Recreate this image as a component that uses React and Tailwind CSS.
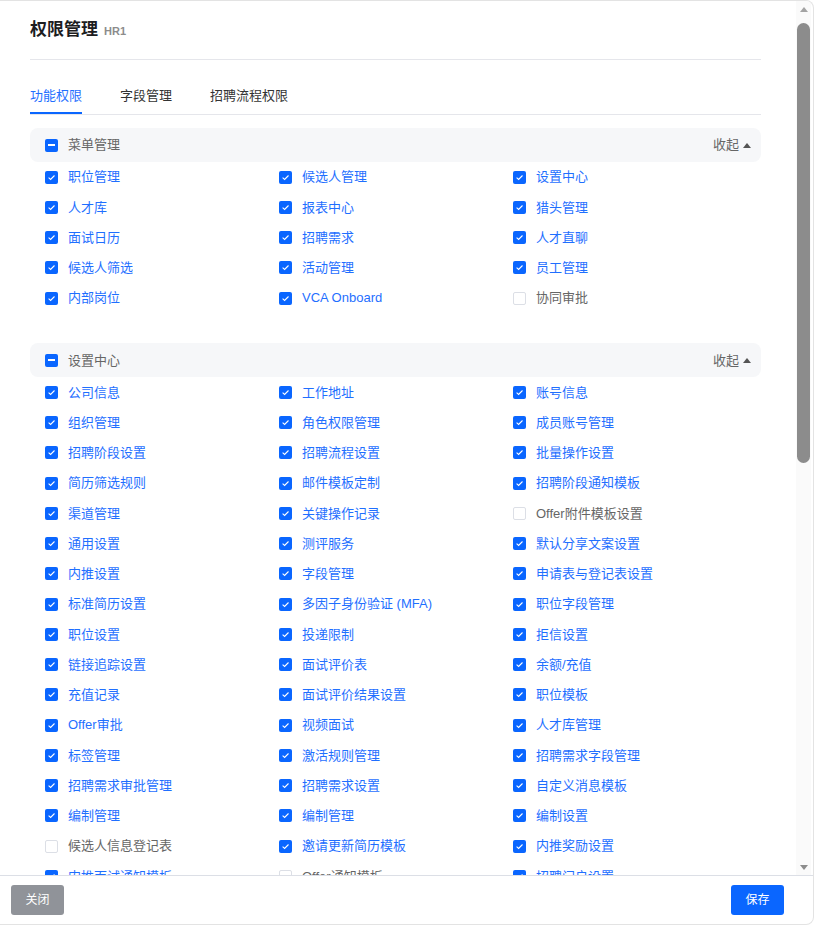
import React from 'react'

const FONT = { fontFamily: '"Liberation Sans", "Noto Sans CJK SC", sans-serif' }

// [label, checked]
const menuItems = [
  ['职位管理', 1], ['候选人管理', 1], ['设置中心', 1],
  ['人才库', 1], ['报表中心', 1], ['猎头管理', 1],
  ['面试日历', 1], ['招聘需求', 1], ['人才直聊', 1],
  ['候选人筛选', 1], ['活动管理', 1], ['员工管理', 1],
  ['内部岗位', 1], ['VCA Onboard', 1], ['协同审批', 0],
]

const settingItems = [
  ['公司信息', 1], ['工作地址', 1], ['账号信息', 1],
  ['组织管理', 1], ['角色权限管理', 1], ['成员账号管理', 1],
  ['招聘阶段设置', 1], ['招聘流程设置', 1], ['批量操作设置', 1],
  ['简历筛选规则', 1], ['邮件模板定制', 1], ['招聘阶段通知模板', 1],
  ['渠道管理', 1], ['关键操作记录', 1], ['Offer附件模板设置', 0],
  ['通用设置', 1], ['测评服务', 1], ['默认分享文案设置', 1],
  ['内推设置', 1], ['字段管理', 1], ['申请表与登记表设置', 1],
  ['标准简历设置', 1], ['多因子身份验证 (MFA)', 1], ['职位字段管理', 1],
  ['职位设置', 1], ['投递限制', 1], ['拒信设置', 1],
  ['链接追踪设置', 1], ['面试评价表', 1], ['余额/充值', 1],
  ['充值记录', 1], ['面试评价结果设置', 1], ['职位模板', 1],
  ['Offer审批', 1], ['视频面试', 1], ['人才库管理', 1],
  ['标签管理', 1], ['激活规则管理', 1], ['招聘需求字段管理', 1],
  ['招聘需求审批管理', 1], ['招聘需求设置', 1], ['自定义消息模板', 1],
  ['编制管理', 1], ['编制管理', 1], ['编制设置', 1],
  ['候选人信息登记表', 0], ['邀请更新简历模板', 1], ['内推奖励设置', 1],
  ['内推面试通知模板', 1], ['Offer通知模板', 0], ['招聘门户设置', 1],
]

function Box({ state }) {
  if (state === 'off') {
    return <span className="w-[13px] h-[13px] rounded-[2px] border border-[#dcdfe6] bg-white shrink-0" />
  }
  return (
    <span className="w-[13px] h-[13px] rounded-[2px] bg-[#0a66ff] flex items-center justify-center shrink-0">
      {state === 'on' ? (
        <svg width="9" height="9" viewBox="0 0 9 9">
          <path d="M1.6 4.7 L3.6 6.5 L7.5 2.5" fill="none" stroke="white" strokeWidth="1.1" />
        </svg>
      ) : (
        <span className="w-[7px] h-[2px] bg-white" />
      )}
    </span>
  )
}

function Section({ title, items }) {
  return (
    <div>
      <div className="h-[34px] bg-[#f6f7f9] rounded-lg flex items-center pl-[15px] pr-[10px]">
        <Box state="mixed" />
        <span className="ml-[10px] text-[13px] text-[#666]">{title}</span>
        <span className="ml-auto flex items-center text-[13px] text-[#666]">
          收起
          <svg className="ml-[4px]" width="8" height="5" viewBox="0 0 8 5">
            <path d="M0 5 L4 0 L8 5 Z" fill="#555" />
          </svg>
        </span>
      </div>
      <div className="grid grid-cols-3 pl-[15px] pr-[14px]">
        {items.map(([label, on], i) => (
          <div key={i} className="h-[30.25px] flex items-center">
            <Box state={on ? 'on' : 'off'} />
            <span className={`ml-[10px] text-[13px] whitespace-nowrap ${on ? 'text-[#1f6fff]' : 'text-[#666]'}`}>
              {label}
            </span>
          </div>
        ))}
      </div>
    </div>
  )
}

// classic scrollbar: arrow buttons and a rounded thumb
function ScrollBar() {
  return (
    <div className="w-[15px] shrink-0 flex flex-col bg-[#fafafa]">
      <div className="h-[16px] flex items-center justify-center">
        <svg width="8" height="5" viewBox="0 0 8 5">
          <path d="M0 5 L4 0 L8 5 Z" fill="#a3a3a3" />
        </svg>
      </div>
      <div className="flex-1 px-[1px]">
        <div className="mt-[6px] h-[440px] rounded-full bg-[#8c8c8c]" />
      </div>
      <div className="h-[16px] flex items-center justify-center">
        <svg width="8" height="5" viewBox="0 0 8 5">
          <path d="M0 0 L8 0 L4 5 Z" fill="#8c8c8c" />
        </svg>
      </div>
    </div>
  )
}

export default function App() {
  return (
    <div className="w-[817px] h-[925px] bg-white" style={FONT}>
      <div className="w-[814px] h-full flex flex-col border-t border-r border-b border-[#e3e3e3] rounded-br-lg rounded-tr-lg overflow-hidden">
        <div className="flex-1 min-h-0 flex pr-[2px]">
          <div className="flex-1 min-w-0 overflow-hidden pl-[30px] pr-[35px]">
            {/* header */}
            <div className="pt-[19px] h-[59px] border-b border-[#e5e6eb]">
              <div className="h-[20px] flex items-center">
                <span className="text-[17px] font-bold text-[#1d1d1f]">权限管理</span>
                <span className="ml-[6px] mt-[2px] text-[11px] font-bold text-[#8c8c8c]">HR1</span>
              </div>
            </div>

            {/* tabs */}
            <div className="flex pt-[26px] border-b border-[#e5e6eb] text-[13px]">
              <div className="h-[28px] -mb-px border-b-2 border-[#0a66ff] text-[#1f6fff] leading-[20px]">功能权限</div>
              <div className="ml-[38px] h-[28px] text-[#333] leading-[20px]">字段管理</div>
              <div className="ml-[38px] h-[28px] text-[#333] leading-[20px]">招聘流程权限</div>
            </div>

            <div className="mt-[13px] flex flex-col gap-[30px]">
              <Section title="菜单管理" items={menuItems} />
              <Section title="设置中心" items={settingItems} />
            </div>
          </div>
          <ScrollBar />
        </div>

        {/* footer */}
        <div className="h-[49px] shrink-0 border-t border-[#dcdfe6] flex items-center justify-between pl-[11px] pr-[29px]">
          <button className="w-[53px] h-[30px] rounded-[3px] bg-[#909399] text-white text-[12px]">关闭</button>
          <button className="w-[53px] h-[30px] rounded-[3px] bg-[#0a66ff] text-white text-[12px]">保存</button>
        </div>
      </div>
    </div>
  )
}
